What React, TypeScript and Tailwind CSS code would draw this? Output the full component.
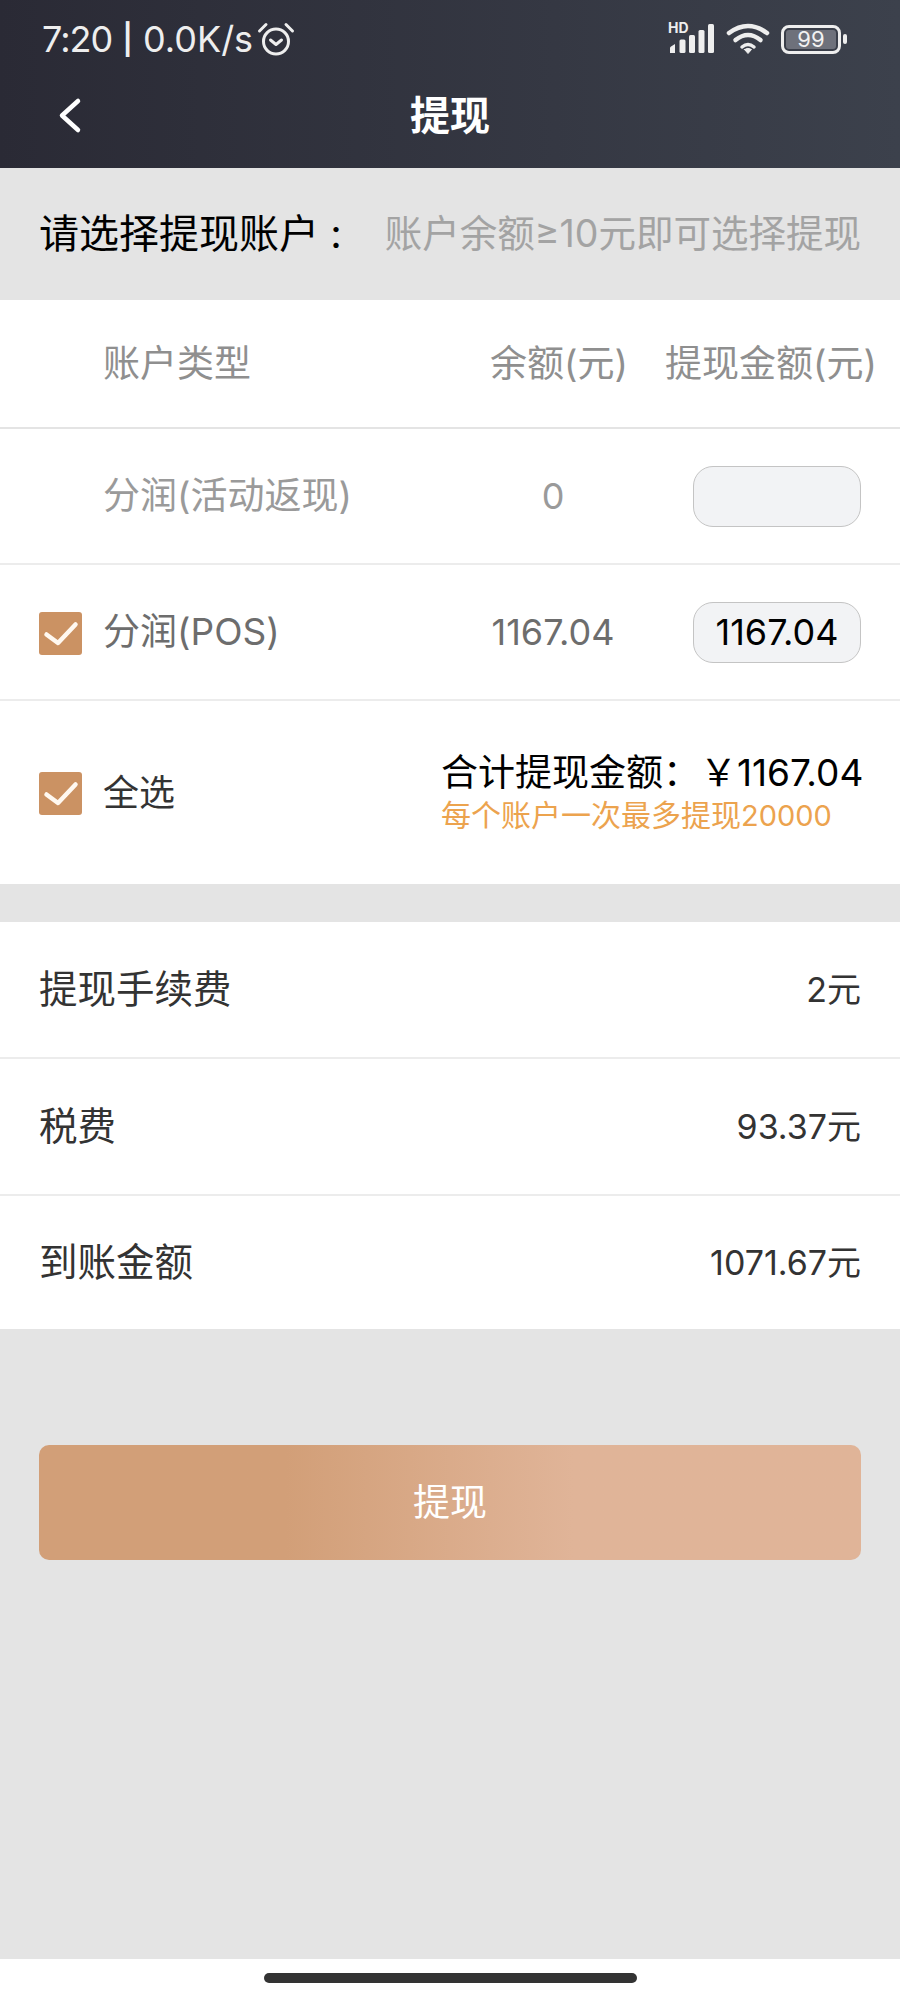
const font = "font-['Inter','Noto_Sans_CJK_SC',sans-serif]";

const CheckBox = () => (
  <div className="mt-[2px] h-[43px] w-[43px] rounded-[3px] bg-[#cb9263]">
    <svg width="43" height="43" viewBox="0 0 43 43" fill="none">
      <path d="M7.5 22.5 L19 31 L36.5 12.5" stroke="#fff8f0" strokeWidth="4.5" strokeLinecap="round" strokeLinejoin="round" />
    </svg>
  </div>
);

const AlarmIcon = () => (
  <svg width="38" height="36" viewBox="0 0 38 36" fill="none" stroke="#eeeeee" strokeLinecap="round" strokeLinejoin="round">
    <circle cx="19" cy="20.5" r="12.5" strokeWidth="3" />
    <path d="M13.5 19 L19 23.5 L24.5 19" strokeWidth="3" />
    <path d="M2.5 10 L9 3.5 M35.5 10 L29 3.5" strokeWidth="3" />
  </svg>
);

const SignalIcon = () => (
  <div className="relative h-[30px] w-[47px]">
    <span className="absolute left-0 top-[-3px] text-[14px] font-bold leading-[14px] text-[#eeeeee]">HD</span>
    <svg className="absolute left-0 top-0" width="47" height="30" viewBox="0 0 47 30" fill="#eeeeee">
      <path d="M2 29 L2 24 Q2 23 3 22.5 L7 20 L7 29 Z" />
      <rect x="11.5" y="15.5" width="6" height="13.5" rx="1.5" />
      <rect x="21" y="11" width="6" height="18" rx="1.5" />
      <rect x="30.5" y="6" width="6" height="23" rx="1.5" />
      <rect x="40" y="0" width="6" height="29" rx="1.5" />
    </svg>
  </div>
);

const WifiIcon = () => (
  <svg width="44" height="32" viewBox="0 0 44 32" fill="none" stroke="#eeeeee" strokeLinecap="round">
    <path d="M3 10 Q22 -4 41 10" strokeWidth="4.5" />
    <path d="M9.5 17 Q22 7 34.5 17" strokeWidth="4.5" />
    <path d="M16 24 Q22 19 28 24" strokeWidth="3.5" />
    <path d="M18.5 26.5 L22 30.5 L25.5 26.5 Q22 24 18.5 26.5 Z" fill="#eeeeee" strokeWidth="1" />
  </svg>
);

const BatteryIcon = () => (
  <div className="flex items-center gap-[2px]">
    <div className="flex h-[29px] w-[60px] items-center justify-center rounded-[8px] border-[3px] border-[#eeeeee] p-[2px]">
      <div className="flex h-full w-full items-center justify-center rounded-[3px] bg-[#6e717b] text-[22px] leading-none text-[#f2f2f2]">
        99
      </div>
    </div>
    <div className="h-[10px] w-[4px] rounded-[2px] bg-[#eeeeee]" />
  </div>
);

const AccountRow = ({ name, balance, value, checked, muted }: { name: string; balance: string; value?: string; checked?: boolean; muted?: boolean }) => (
  <div className="flex h-[136px] items-center border-b-2 border-[#ececec] pl-[39px] pr-[39px]">
    <div className="w-[43px]">{checked && <CheckBox />}</div>
    <div className={`ml-[21px] w-[367px] text-[37px] ${muted ? 'text-[#9a9a9a]' : 'text-[#6d6d6d]'}`}>{name}</div>
    <div className={`w-[166px] text-center text-[36px] ${muted ? 'text-[#9a9a9a]' : 'text-[#6d6d6d]'}`}>{balance}</div>
    <div className="ml-[57px] flex h-[61px] w-[168px] items-center justify-center rounded-[20px] border border-[#c4c4c4] bg-[#f2f3f5] text-[36px] text-black">
      {value}
    </div>
  </div>
);

const FeeRow = ({ label, value, last }: { label: string; value: string; last?: boolean }) => (
  <div className={`flex items-center justify-between px-[39px] text-[#333333] ${last ? 'h-[133px]' : 'h-[137px] border-b-2 border-[#ececec]'}`}>
    <span className="text-[38.5px]">{label}</span>
    <span className="text-[34px]">{value}</span>
  </div>
);

export default function App() {
  return (
    <div className={`flex h-[2000px] w-[900px] flex-col overflow-hidden bg-[#e4e4e4] ${font}`}>
      <div className="h-[168px] bg-gradient-to-r from-[#2a2a35] to-[#3c414c] text-white">
        <div className="flex h-[78px] items-center justify-between pl-[42px] pr-[53px]">
          <div className="flex items-center text-[36px] text-[#eeeeee]">
            <span className="tracking-[-1px]">7:20</span>
            <span className="ml-[10px] text-[30px] font-semibold">|</span>
            <span className="ml-[10px]">0.0K/s</span>
            <span className="ml-[4px]">
              <AlarmIcon />
            </span>
          </div>
          <div className="flex items-center gap-[11px]">
            <SignalIcon />
            <WifiIcon />
            <BatteryIcon />
          </div>
        </div>
        <div className="relative flex h-[76px] items-center justify-center">
          <svg className="absolute left-[54px] top-[15px]" width="32" height="44" viewBox="0 0 32 44" fill="none">
            <path d="M24 8 L8 22.5 L24 37" stroke="#fff" strokeWidth="4.5" strokeLinecap="round" strokeLinejoin="round" />
          </svg>
          <span className="text-[40px] font-bold">提现</span>
        </div>
      </div>

      <div className="flex h-[132px] items-center justify-between pl-[39px] pr-[39px]">
        <span className="text-[40px] text-black">请选择提现账户 :</span>
        <span className="text-[37.5px] text-[#a3a3a3]">账户余额≥10元即可选择提现</span>
      </div>

      <div className="bg-white">
        <div className="flex h-[129px] items-center border-b-2 border-[#e4e4e4] pl-[103px] text-[37px] text-[#8f8f8f]">
          <div className="w-[367px]">账户类型</div>
          <div className="w-[178px] text-center">余额(元)</div>
          <div className="ml-[17px] whitespace-nowrap">提现金额(元)</div>
        </div>
        <AccountRow name="分润(活动返现)" balance="0" muted />
        <AccountRow name="分润(POS)" balance="1167.04" value="1167.04" checked />
        <div className="flex h-[183px] items-center justify-between pl-[39px] pr-[39px]">
          <div className="flex items-center gap-[21px]">
            <CheckBox />
            <span className="text-[36px] text-[#333333]">全选</span>
          </div>
          <div className="w-[420px]">
            <div className="flex justify-between whitespace-nowrap text-[37px] leading-[46px] text-black">
              <span>合计提现金额：</span>
              <span>￥1167.04</span>
            </div>
            <div className="text-[30px] leading-[38px] text-[#eca34e]">
              每个账户一次最多提现<span className="text-[29px]">20000</span>
            </div>
          </div>
        </div>
      </div>

      <div className="mt-[38px] bg-white">
        <FeeRow label="提现手续费" value="2元" />
        <FeeRow label="税费" value="93.37元" />
        <FeeRow label="到账金额" value="1071.67元" last />
      </div>

      <button className="mx-[39px] mt-[116px] flex h-[115px] items-center justify-center rounded-[10px] bg-gradient-to-r from-[#d29f78] from-30% to-[#e0b498] to-65% text-[37px] text-white">
        提现
      </button>

      <div className="mt-auto flex h-[41px] justify-center bg-white pt-[14px]">
        <div className="h-[10px] w-[373px] rounded-full bg-[#333333]" />
      </div>
    </div>
  );
}
